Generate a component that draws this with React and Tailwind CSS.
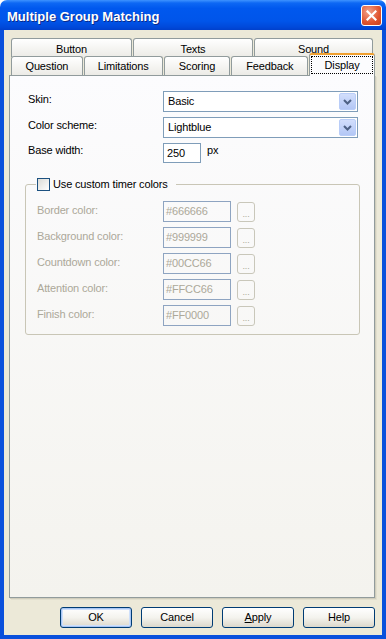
import React from "react";

const font = { fontFamily: '"Liberation Sans", Arial, sans-serif' };

const backTabs = [
  { label: "Button", w: "w-[121px]" },
  { label: "Texts", w: "w-[120px]" },
  { label: "Sound", w: "w-[119px]" },
];

const frontTabs = [
  { label: "Question", w: "w-[72px]" },
  { label: "Limitations", w: "w-[79px]" },
  { label: "Scoring", w: "w-[67px]" },
  { label: "Feedback", w: "w-[77px]" },
];

const timerColors = [
  { label: "Border color:", value: "#666666" },
  { label: "Background color:", value: "#999999" },
  { label: "Countdown color:", value: "#00CC66" },
  { label: "Attention color:", value: "#FFCC66" },
  { label: "Finish color:", value: "#FF0000" },
];

const ComboArrow = () => (
  <div className="w-[17px] h-[17px] mr-[1px] rounded-[2px] border border-[#B9CDF8] bg-linear-to-b from-[#D2DEFC] to-[#B3C7F5] flex items-center justify-center">
    <svg width="9" height="6" viewBox="0 0 9 6">
      <path d="M1 1 L4.5 4.5 L8 1" fill="none" stroke="#4D6185" strokeWidth="2" />
    </svg>
  </div>
);

const Combo = ({ value }) => (
  <div className="w-[195px] h-[21px] border border-[#7F9DB9] bg-white flex items-center justify-between">
    <span className="pl-[4px] text-[11px] text-black">{value}</span>
    <ComboArrow />
  </div>
);

const XPButton = ({ children, primary }) => (
  <button
    className={`w-[72px] h-[21px] rounded-[3px] border border-[#003C74] bg-linear-to-b from-white via-[#F4F3EE] to-[#DCD8CB] text-[11px] text-black flex items-center justify-center ${
      primary ? "shadow-[inset_0_0_0_1px_#A8C6F4,inset_0_0_0_2px_#CFE0FB]" : ""
    }`}
  >
    {children}
  </button>
);

const App = () => {
  return (
    <div className="w-[386px] h-[639px] flex flex-col bg-white" style={font}>
      {/* Title bar */}
      <div className="h-[30px] rounded-t-[7px] bg-[linear-gradient(to_bottom,#3E93FF_0%,#0D68F4_10%,#0058EE_28%,#0055EA_70%,#0049DA_90%,#0040CC_100%)] flex items-start justify-between">
        <span className="ml-[7px] mt-[7px] text-[13px] font-bold text-white [text-shadow:1px_1px_0_#0A2A8A]">
          Multiple Group Matching
        </span>
        <div className="mt-[5px] mr-[4px] w-[21px] h-[21px] rounded-[3px] border border-white bg-[radial-gradient(circle_at_35%_30%,#F1A38C,#E0542F_60%,#C6401F)] flex items-center justify-center">
          <svg width="11" height="11" viewBox="0 0 11 11">
            <path d="M1.5 1.5 L9.5 9.5 M9.5 1.5 L1.5 9.5" stroke="white" strokeWidth="2.2" strokeLinecap="square" />
          </svg>
        </div>
      </div>

      {/* Window body */}
      <div className="flex-1 flex flex-col bg-[#ECE9D8] border-x-[4px] border-b-[4px] border-[#0A50DC] pt-[8px] pl-[5px] pr-[7px] tracking-[-0.15px]">
        {/* Tabs */}
        <div className="flex flex-col">
          <div className="flex gap-[1px] pl-[2px] h-[18px]">
            {backTabs.map((t) => (
              <div
                key={t.label}
                className={`${t.w} h-[19px] flex items-start justify-center pt-[2px] border border-b-0 border-[#919B9C] rounded-t-[3px] bg-linear-to-b from-white to-[#ECEBE6] text-[11px] text-black`}
              >
                {t.label}
              </div>
            ))}
          </div>
          <div className="flex items-start gap-[1px] pl-[2px] h-[19px]">
            {frontTabs.map((t) => (
              <div
                key={t.label}
                className={`${t.w} h-[19px] flex items-center justify-center border border-b-0 border-[#919B9C] rounded-t-[3px] bg-linear-to-b from-white to-[#ECEBE6] text-[11px] text-black`}
              >
                {t.label}
              </div>
            ))}
            <div className="relative z-10 w-[66px] h-[23px] -mt-[3px] border-x border-[#919B9C] border-t-[2px] border-t-[#F0A030] rounded-t-[3px] bg-[#FCFCFE] pl-[1px] pr-[1px] pt-[1px] pb-[2px] flex">
              <div className="flex-1 border border-dotted border-black flex items-center justify-center text-[11px] text-black">
                Display
              </div>
            </div>
          </div>
        </div>

        {/* Panel */}
        <div className="w-[366px] h-[523px] border border-[#919B9C] bg-linear-to-b from-[#FCFCFE] to-[#F4F3EE] shadow-[1px_1px_0_#D0CDBC,2px_2px_0_#E2DFCE] pl-[15px] pr-[14px] pt-[15px] text-[11px] text-black">
          <div className="flex items-center pl-[3px]">
            <span className="w-[135px] -mt-[4px]">Skin:</span>
            <Combo value="Basic" />
          </div>
          <div className="flex items-center pl-[3px] mt-[5px]">
            <span className="w-[135px] -mt-[5px]">Color scheme:</span>
            <Combo value="Lightblue" />
          </div>
          <div className="flex items-center pl-[3px] mt-[5px]">
            <span className="w-[135px] -mt-[5px]">Base width:</span>
            <div className="w-[38px] h-[20px] border border-[#7F9DB9] bg-white flex items-center pl-[3px]">250</div>
            <span className="ml-[6px] -mt-[5px]">px</span>
          </div>

          <fieldset className="mt-[15px] w-[335px] border border-[#C9C6B6] rounded-[3px] pb-[8px]">
            <legend className="ml-[10px] pl-[1px] pr-[8px] h-[13px] flex items-center gap-[3px]">
              <span className="w-[13px] h-[13px] border border-[#1C5180] bg-linear-to-br from-[#DCDCD7] to-white" />
              <span>Use custom timer colors</span>
            </legend>
            <div className="flex flex-col gap-[5px] mt-[10px] pl-[11px]">
              {timerColors.map((c) => (
                <div key={c.label} className="flex items-center text-[#ACA899]">
                  <span className="w-[126px] -mt-[2px]">{c.label}</span>
                  <div className="w-[68px] h-[21px] border border-[#8EA4C1] flex items-center pl-[2px]">{c.value}</div>
                  <div className="ml-[6px] w-[18px] h-[20px] rounded-[3px] border border-[#C9C7BA] flex items-end justify-center pb-[2px] text-[9px] leading-none">
                    ...
                  </div>
                </div>
              ))}
            </div>
          </fieldset>
        </div>

        {/* Buttons */}
        <div className="flex justify-end gap-[9px] mt-[9px]">
          <XPButton primary>OK</XPButton>
          <XPButton>Cancel</XPButton>
          <XPButton>
            <span>
              <span className="underline">A</span>pply
            </span>
          </XPButton>
          <XPButton>Help</XPButton>
        </div>
      </div>
    </div>
  );
};

export default App;
